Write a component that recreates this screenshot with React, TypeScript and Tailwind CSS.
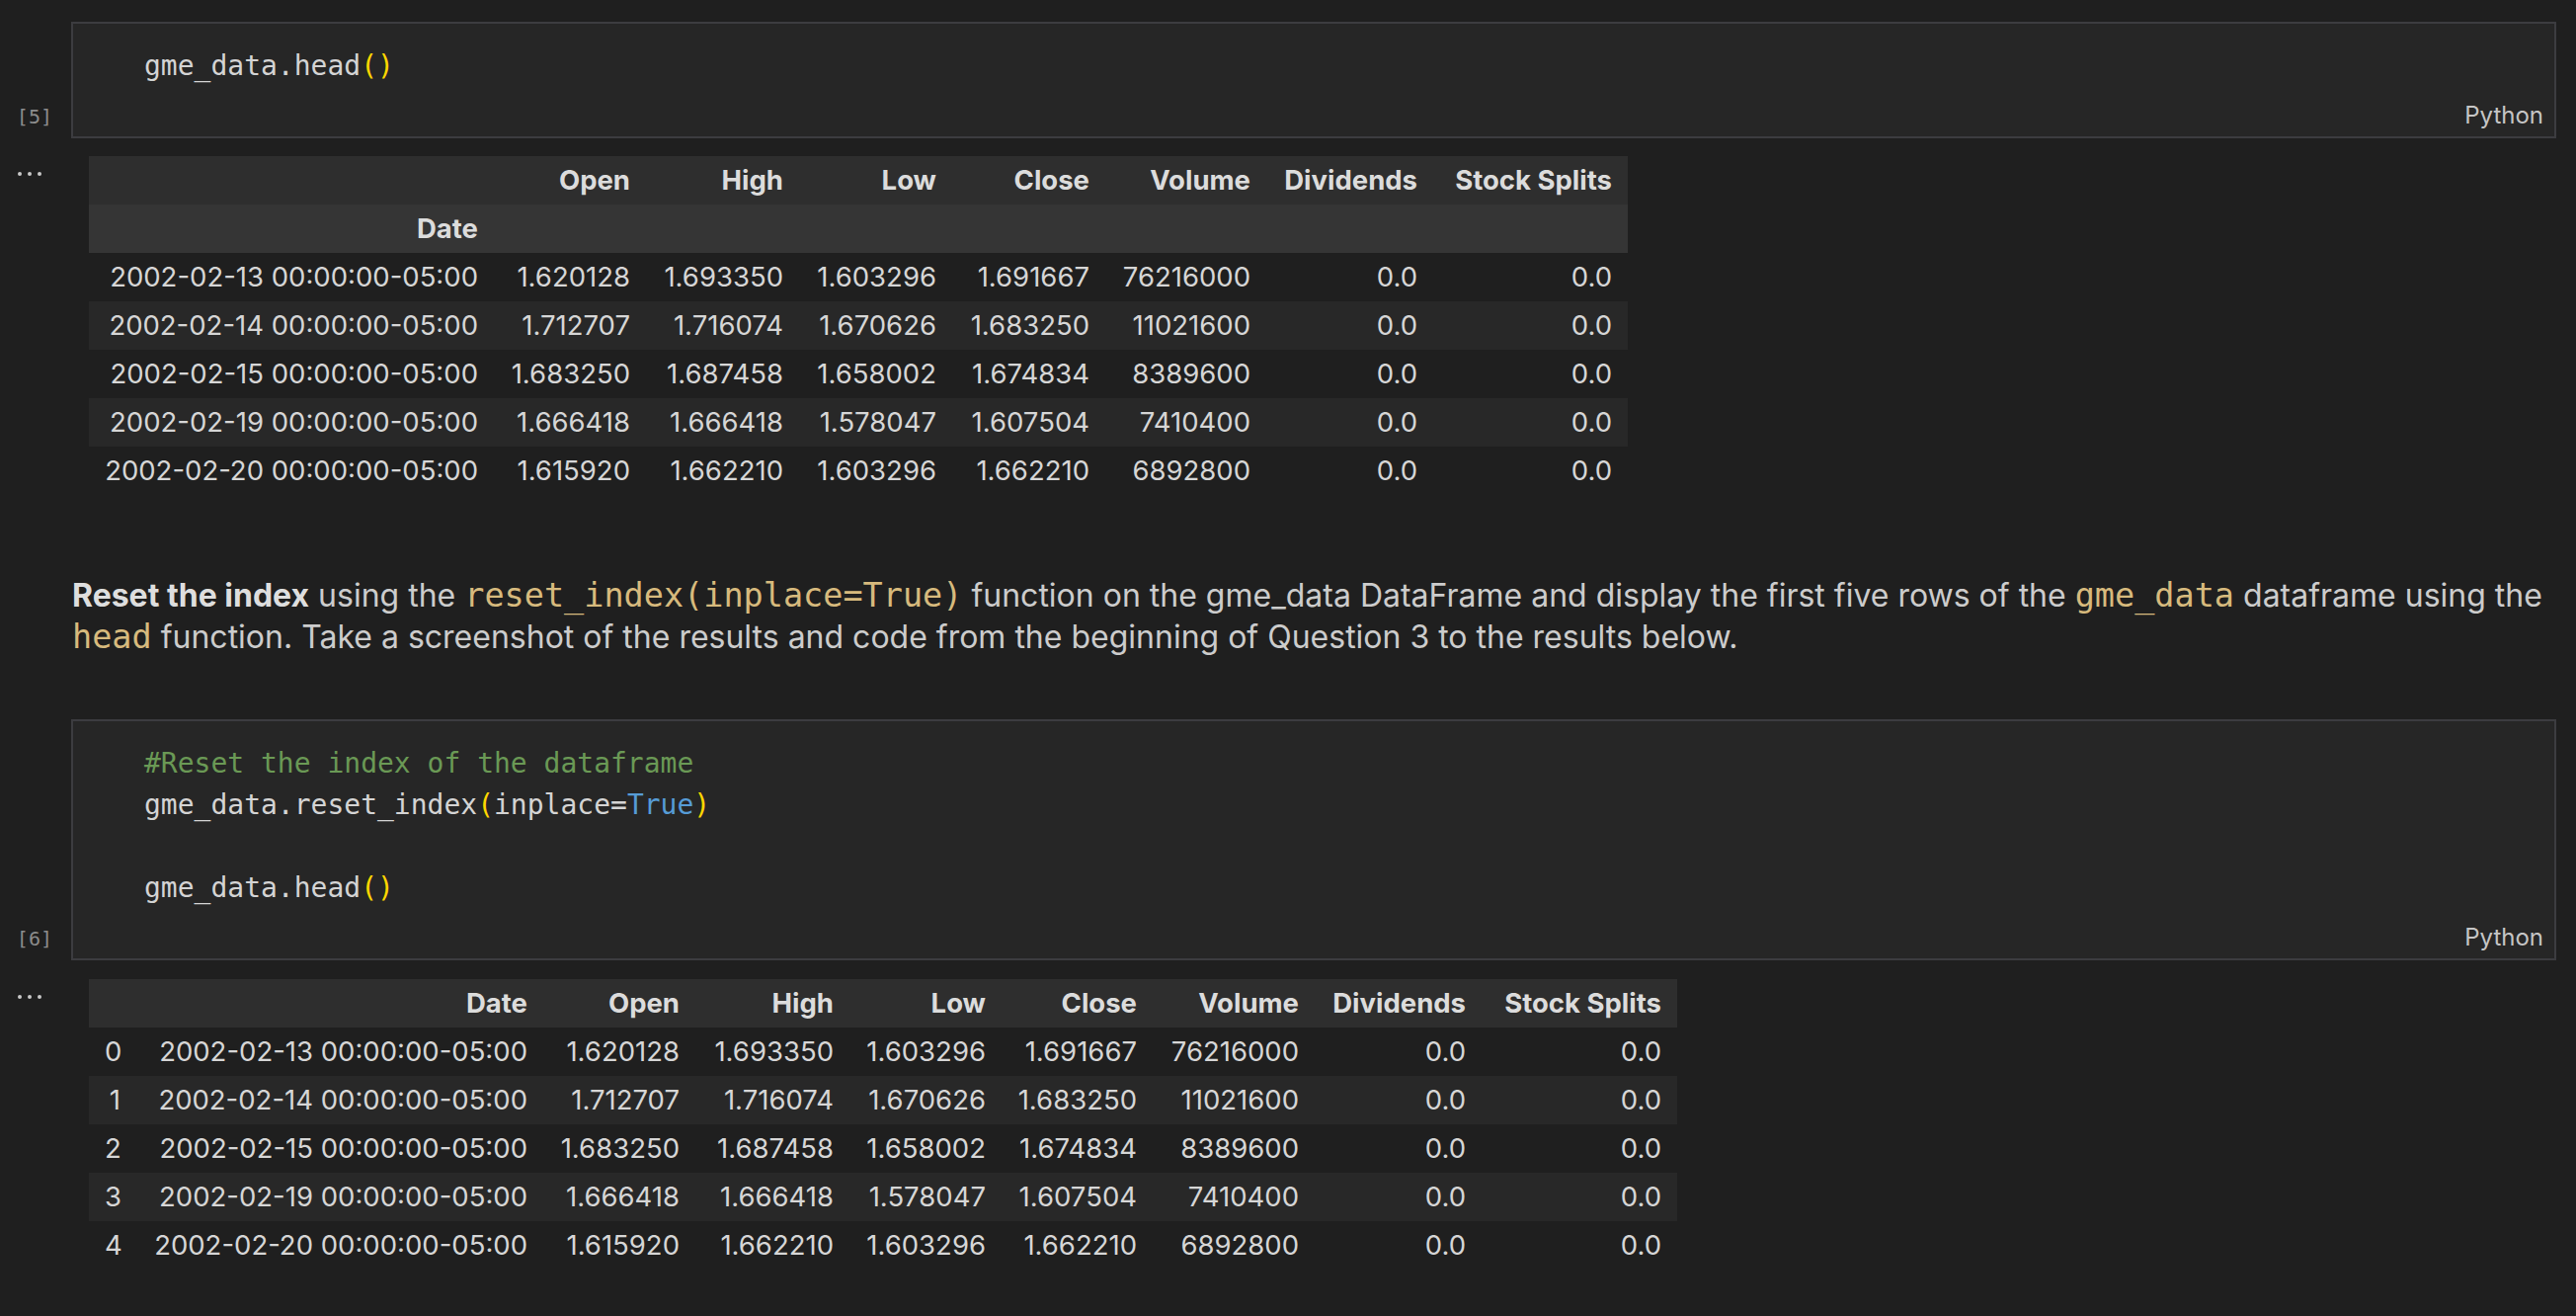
import React from "react";

// notebook: two code cells with dataframe output and a markdown cell between them

const MONO = "font-['DejaVu_Sans_Mono',monospace]";
const SANS = "font-['Inter',sans-serif]";

const rows = [
  ["2002-02-13 00:00:00-05:00", "1.620128", "1.693350", "1.603296", "1.691667", "76216000", "0.0", "0.0"],
  ["2002-02-14 00:00:00-05:00", "1.712707", "1.716074", "1.670626", "1.683250", "11021600", "0.0", "0.0"],
  ["2002-02-15 00:00:00-05:00", "1.683250", "1.687458", "1.658002", "1.674834", "8389600", "0.0", "0.0"],
  ["2002-02-19 00:00:00-05:00", "1.666418", "1.666418", "1.578047", "1.607504", "7410400", "0.0", "0.0"],
  ["2002-02-20 00:00:00-05:00", "1.615920", "1.662210", "1.603296", "1.662210", "6892800", "0.0", "0.0"],
];

const cols = ["Open", "High", "Low", "Close", "Volume", "Dividends", "Stock Splits"];

// column widths (padding included)
const widthsA = ["w-[410px]", "w-[154px]", "w-[155px]", "w-[155px]", "w-[155px]", "w-[163px]", "w-[169px]", "w-[197px]"];
const widthsB = ["w-[48px]", "w-[412px]", "w-[154px]", "w-[156px]", "w-[154px]", "w-[153px]", "w-[164px]", "w-[169px]", "w-[198px]"];

const P = ({ children }: { children: React.ReactNode }) => <span className="text-[#ffd700]">{children}</span>;

function CodeCell({ count, children }: { count: number; children: React.ReactNode }) {
  return (
    <div className="flex">
      <div className={`w-[72px] shrink-0 flex items-end justify-end pr-[19px] pb-[10px] ${MONO} text-[20px] leading-[24px] text-[#8c8c8c]`}>
        [{count}]
      </div>
      <div className="flex-1 flex flex-col border-2 border-[#3c3c40] bg-[#262626]">
        <div className={`pt-[22px] pl-[72px] ${MONO} text-[28px] leading-[42px] text-[#d4d4d4] whitespace-pre`}>{children}</div>
        <div className="h-[50px] flex items-end justify-end pr-[11px] pb-[6px]">
          <span className={`${SANS} text-[24px] leading-[30px] text-[#c5c5c5]`}>Python</span>
        </div>
      </div>
    </div>
  );
}

function Output({ children, className }: { children: React.ReactNode; className: string }) {
  return (
    <div className={`flex ${className}`}>
      <div className="w-[90px] shrink-0 flex gap-[6px] pl-[18px] pt-[16px] h-fit">
        <div className="w-[4px] h-[4px] rounded-full bg-[#c8c8c8]" />
        <div className="w-[4px] h-[4px] rounded-full bg-[#c8c8c8]" />
        <div className="w-[4px] h-[4px] rounded-full bg-[#c8c8c8]" />
      </div>
      {children}
    </div>
  );
}

const cell = "px-4 text-right whitespace-nowrap";
const table = `table-fixed border-collapse shrink-0 ${SANS} text-[27.5px] text-[#d6d6d6]`;

function TableA() {
  return (
    <table className={`${table} w-[1558px]`}>
      <thead>
        <tr className="h-[49px] bg-[#2e2e2e]">
          <th className={`${cell} ${widthsA[0]}`} />
          {cols.map((c, i) => (
            <th key={c} className={`${cell} ${widthsA[i + 1]} font-bold text-[#dcdcdc]`}>{c}</th>
          ))}
        </tr>
        <tr className="h-[49px] bg-[#353535]">
          <th className={`${cell} font-bold text-[#dcdcdc]`}>Date</th>
          {cols.map((c) => (
            <th key={c} className={cell} />
          ))}
        </tr>
      </thead>
      <tbody>
        {rows.map((r, i) => (
          <tr key={i} className={`h-[49px] ${i % 2 === 1 ? "bg-[#282828]" : ""}`}>
            {r.map((v, j) => (
              <td key={j} className={cell}>{v}</td>
            ))}
          </tr>
        ))}
      </tbody>
    </table>
  );
}

function TableB() {
  return (
    <table className={`${table} w-[1608px]`}>
      <thead>
        <tr className="h-[49px] bg-[#2e2e2e]">
          <th className={`${cell} ${widthsB[0]}`} />
          {["Date", ...cols].map((c, i) => (
            <th key={c} className={`${cell} ${widthsB[i + 1]} font-bold text-[#dcdcdc]`}>{c}</th>
          ))}
        </tr>
      </thead>
      <tbody>
        {rows.map((r, i) => (
          <tr key={i} className={`h-[49px] ${i % 2 === 1 ? "bg-[#282828]" : ""}`}>
            <td className={cell}>{i}</td>
            {r.map((v, j) => (
              <td key={j} className={cell}>{v}</td>
            ))}
          </tr>
        ))}
      </tbody>
    </table>
  );
}

const code = `${MONO} text-[33.5px] text-[#d7ba7d]`;

export default function App() {
  return (
    <div className="min-h-screen w-full bg-[#1f1f1f] pt-[22px] pr-[20px]">
      <CodeCell count={5}>
        gme_data.head<P>()</P>
      </CodeCell>

      <Output className="mt-[18px]">
        <TableA />
      </Output>

      <div className={`mt-[81px] pl-[73px] ${SANS} text-[32px] leading-[42px] text-[#cccccc]`}>
        <b className="font-bold text-[#dedede]">Reset the index</b> using the{" "}
        <code className={code}>reset_index(inplace=True)</code> function on the gme_data DataFrame and display the
        first five rows of the <code className={code}>gme_data</code> dataframe using the
        <br />
        <code className={code}>head</code> function. Take a screenshot of the results and code from the beginning of
        Question 3 to the results below.
      </div>

      <div className="mt-[62px]">
        <CodeCell count={6}>
          <span className="text-[#6a9955]">#Reset the index of the dataframe</span>
          {"\n"}gme_data.reset_index<P>(</P>inplace=<span className="text-[#569cd6]">True</span>
          <P>)</P>
          {"\n\n"}gme_data.head<P>()</P>
        </CodeCell>
      </div>

      <Output className="mt-[19px]">
        <TableB />
      </Output>
    </div>
  );
}
